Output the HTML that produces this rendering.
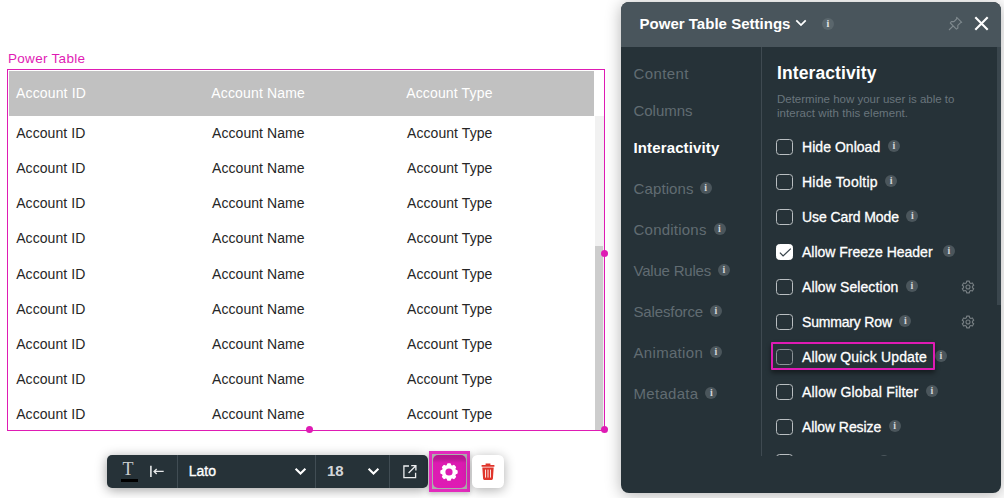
<!DOCTYPE html>
<html lang="en">
<head>
<meta charset="utf-8">
<title>Power Table Settings</title>
<style>
*{box-sizing:border-box;margin:0;padding:0}
html,body{width:1004px;height:498px;overflow:hidden;background:#fff}
body{position:relative;font-family:"Liberation Sans",sans-serif;color:#222}
.abs{position:absolute}
svg{position:absolute;overflow:visible}
/* ---------- table ---------- */
#lbl{left:8px;top:51px;font-size:13.5px;line-height:16px;color:#df1bb4;white-space:nowrap;letter-spacing:.3px}
#tbl{left:7px;top:69px;width:598px;height:362px;border:1px solid #df1bb4;background:#fff;overflow:hidden}
#thead{left:1px;top:1px;width:585px;height:45px;background:#c1c1c1}
.th,.td{position:absolute;font-size:14px;line-height:16px;white-space:nowrap;letter-spacing:.15px}
.th{color:#fff;top:15px}
.td{color:#262626;letter-spacing:.07px}
#track{left:587px;top:46px;width:9px;height:315px;background:#f1f1f1}
#thumb{left:587px;top:176px;width:8px;height:184px;background:#cdcdcd}
.dot{width:7px;height:7px;border-radius:50%;background:#df1bb4}
/* ---------- toolbar ---------- */
#tb{left:107px;top:455px;width:320.7px;height:32.6px;background:#263238;border-radius:5px;box-shadow:0 2px 12px rgba(0,0,0,.38)}
.sep{top:0;width:1px;height:33px;background:#414d54}
.tbt{color:#fff;font-size:14px;line-height:16px;white-space:nowrap}
#gearwrap{left:429px;top:451px;width:40.5px;height:40.5px;border:3px solid #e32bbd;background:#adadad;box-shadow:0 2px 5px rgba(0,0,0,.25)}
#gearbtn{left:1px;top:1px;width:33px;height:33px;background:linear-gradient(#b5168f,#bb1796 12%,#dc1bb1 24%,#df1bb4);border-radius:5px}
#del{left:472px;top:455px;width:31.6px;height:33px;background:#fff;border-radius:5.5px;box-shadow:0 2px 12px rgba(0,0,0,.32)}
/* ---------- panel ---------- */
#panel{left:621px;top:2px;width:380px;height:491px;background:#263238;border-radius:8px;box-shadow:0 2px 16px rgba(0,0,0,.3);overflow:hidden}
#phead{left:0;top:0;width:380px;height:45px;background:#49555c}
#ptitle{left:18.5px;top:12.5px;font-size:15px;line-height:18px;font-weight:bold;color:#fff;white-space:nowrap;letter-spacing:.02px}
#pbody{left:0;top:45px;width:380px;height:409px;overflow:hidden}
#vline{left:140px;top:0;width:1px;height:410px;background:#3f4a51}
.nav{position:absolute;left:12.5px;font-size:15px;line-height:18px;color:#616c72;white-space:nowrap}
.nav.on{color:#fff;font-weight:bold}
.info{position:absolute;width:12px;height:12px;border-radius:50%;background:#4b565c;color:#d4d7d9;font-size:10px;line-height:12px;text-align:center;font-weight:bold;font-family:"Liberation Serif",serif}
#sect{left:156px;top:16px;font-size:17.5px;line-height:20px;font-weight:bold;color:#fff;white-space:nowrap;letter-spacing:.1px}
.desc{left:156px;font-size:11.5px;line-height:13px;color:#69757c;white-space:nowrap}
.cb{position:absolute;left:155px;width:17px;height:16px;border:1.5px solid #b9bec1;border-radius:3.5px}
.cb.chk{background:#fff;border-color:#fff}
.cb.dim{border-color:#8b9397}
.opt{position:absolute;left:181px;font-size:14px;line-height:16px;color:#fff;white-space:nowrap;-webkit-text-stroke:.3px #fff}
#hl{left:150px;top:295px;width:164.3px;height:28px;border:2.4px solid #df1bb4;border-radius:1px;box-shadow:0 3px 5px rgba(0,0,0,.45)}
#pscroll{left:376px;top:45px;width:4px;height:258px;background:#3a464d}
</style>
</head>
<body>
<div id="lbl" class="abs">Power Table</div>
<div id="tbl" class="abs">
  <div id="thead" class="abs"></div>
  <div class="th" style="left:8px">Account ID</div>
  <div class="th" style="left:203.3px">Account Name</div>
  <div class="th" style="left:398.2px">Account Type</div>
  <div id="track" class="abs"></div>
  <div id="thumb" class="abs"></div>
  <div class="td" style="left:8.2px;top:55px">Account ID</div><div class="td" style="left:204px;top:55px">Account Name</div><div class="td" style="left:399px;top:55px">Account Type</div>
  <div class="td" style="left:8.2px;top:90px">Account ID</div><div class="td" style="left:204px;top:90px">Account Name</div><div class="td" style="left:399px;top:90px">Account Type</div>
  <div class="td" style="left:8.2px;top:125px">Account ID</div><div class="td" style="left:204px;top:125px">Account Name</div><div class="td" style="left:399px;top:125px">Account Type</div>
  <div class="td" style="left:8.2px;top:160px">Account ID</div><div class="td" style="left:204px;top:160px">Account Name</div><div class="td" style="left:399px;top:160px">Account Type</div>
  <div class="td" style="left:8.2px;top:196px">Account ID</div><div class="td" style="left:204px;top:196px">Account Name</div><div class="td" style="left:399px;top:196px">Account Type</div>
  <div class="td" style="left:8.2px;top:231px">Account ID</div><div class="td" style="left:204px;top:231px">Account Name</div><div class="td" style="left:399px;top:231px">Account Type</div>
  <div class="td" style="left:8.2px;top:266px">Account ID</div><div class="td" style="left:204px;top:266px">Account Name</div><div class="td" style="left:399px;top:266px">Account Type</div>
  <div class="td" style="left:8.2px;top:301px">Account ID</div><div class="td" style="left:204px;top:301px">Account Name</div><div class="td" style="left:399px;top:301px">Account Type</div>
  <div class="td" style="left:8.2px;top:336px">Account ID</div><div class="td" style="left:204px;top:336px">Account Name</div><div class="td" style="left:399px;top:336px">Account Type</div>
</div>
<div class="abs dot" style="left:601.3px;top:249.5px"></div>
<div class="abs dot" style="left:306px;top:426px"></div>
<div class="abs dot" style="left:600.8px;top:426px"></div>
<div id="tb" class="abs">
  <div class="abs" style="left:12px;top:3px;width:18px;text-align:center;font-family:'Liberation Serif',serif;font-size:18px;line-height:22px;color:#c9cdcf">T</div>
  <div class="abs" style="left:14px;top:24px;width:17px;height:3px;background:#000"></div>
  <svg style="left:42px;top:9px" width="16" height="14" viewBox="0 0 16 14"><path d="M1.9 1.7v11.4" stroke="#e6e8e9" stroke-width="1.6" fill="none"/><path d="M14.7 7.4H5.4M7.7 4.9l-2.6 2.5 2.6 2.5" stroke="#e6e8e9" stroke-width="1.4" fill="none"/></svg>
  <div class="abs sep" style="left:70px"></div>
  <div class="abs tbt" style="left:81.8px;top:8px;-webkit-text-stroke:.35px #fff">Lato</div>
  <svg style="left:187px;top:12px" width="13" height="9" viewBox="0 0 13 9"><path d="M1.6 1.8l4.9 4.7 4.9-4.7" stroke="#fff" stroke-width="2.1" fill="none"/></svg>
  <div class="abs sep" style="left:208px"></div>
  <div class="abs tbt" style="left:220px;top:8px;color:#d3d6d8;font-weight:bold;font-size:15px;letter-spacing:-.2px">18</div>
  <svg style="left:260px;top:12px" width="13" height="9" viewBox="0 0 13 9"><path d="M1.6 1.8l4.9 4.7 4.9-4.7" stroke="#fff" stroke-width="2.1" fill="none"/></svg>
  <div class="abs sep" style="left:282px"></div>
  <svg style="left:295px;top:9px" width="16" height="16" viewBox="0 0 16 16"><path d="M7 2H1.9v11.7h11.7V8.8" stroke="#eceeef" stroke-width="1.3" fill="none"/><path d="M6.6 9L13.6 2M9.2 1.7h4.7v4.7" stroke="#eceeef" stroke-width="1.3" fill="none"/></svg>
</div>
<div id="gearwrap" class="abs"><div id="gearbtn" class="abs"></div>
  <svg style="left:6.9px;top:7.5px" width="20" height="20" viewBox="0 0 20 20"><path fill="#fff" fill-rule="evenodd" stroke="#fff" stroke-width="1.5" stroke-linejoin="round" d="M11.68 3.72 L11.11 2.08 L8.89 2.08 L8.32 3.72 L6.75 4.37 L5.19 3.61 L3.61 5.19 L4.37 6.75 L3.72 8.32 L2.08 8.89 L2.08 11.11 L3.72 11.68 L4.37 13.25 L3.61 14.81 L5.19 16.39 L6.75 15.63 L8.32 16.28 L8.89 17.92 L11.11 17.92 L11.68 16.28 L13.25 15.63 L14.81 16.39 L16.39 14.81 L15.63 13.25 L16.28 11.68 L17.92 11.11 L17.92 8.89 L16.28 8.32 L15.63 6.75 L16.39 5.19 L14.81 3.61 L13.25 4.37Z"/><circle cx="10" cy="10" r="3.6" fill="#de1bb3"/></svg>
</div>
<div id="del" class="abs">
  <svg style="left:9px;top:7.5px" width="14" height="18" viewBox="0 0 14 18"><path fill="#e0352b" d="M4.6 0.6h4.8v1.3h4v1.9H0.6V1.9h4zM1.3 4.6h11.4l-.8 11.2c-.05.7-.6 1.2-1.3 1.2H3.4c-.700 0-1.25-.5-1.3-1.2z"/><path d="M4.5 6.6v8M7 6.6v8M9.5 6.6v8" stroke="#fbe3e1" stroke-width="1" fill="none"/></svg>
</div>

<div id="panel" class="abs">
  <div id="phead" class="abs"></div>
  <div id="ptitle" class="abs">Power Table Settings</div>
  <svg style="left:174px;top:17px" width="12" height="8" viewBox="0 0 12 8"><path d="M1.3 1.4l4.7 4.7 4.7-4.7" stroke="#fff" stroke-width="1.8" fill="none"/></svg>
  <div class="info" style="left:201px;top:16px;background:#5a666c;color:#e3e5e6">i</div>
  <svg style="left:327px;top:14px" width="15" height="15" viewBox="0 0 15 15"><path d="M8.7 1.3l5 5-1.3.5-2.6 2.6.1 2.6-1.5 1.1L2.3 7 3.4 5.5l2.6.1L8.6 3z M5.2 9.8L1 14" stroke="#7f898e" stroke-width="1.1" fill="none" stroke-linejoin="round"/></svg>
  <svg style="left:353px;top:14px" width="15" height="15" viewBox="0 0 15 15"><path d="M1.3 1.3l12.4 12.4M13.7 1.3L1.3 13.7" stroke="#fff" stroke-width="2.1" fill="none"/></svg>

  <div id="pbody" class="abs">
  <div id="vline" class="abs"></div>
  <div class="nav" style="top:18px;letter-spacing:0.41px">Content</div>
  <div class="nav" style="top:55px;letter-spacing:-0.04px">Columns</div>
  <div class="nav on" style="top:92px;letter-spacing:0.13px">Interactivity</div>
  <div class="nav" style="top:133px;letter-spacing:0.12px">Captions</div>
  <div class="info" style="left:78.7px;top:134.6px">i</div>
  <div class="nav" style="top:174px;letter-spacing:0.23px">Conditions</div>
  <div class="info" style="left:92.5px;top:175.6px">i</div>
  <div class="nav" style="top:215px;letter-spacing:-0.21px">Value Rules</div>
  <div class="info" style="left:96.8px;top:217px">i</div>
  <div class="nav" style="top:256px;letter-spacing:-0.13px">Salesforce</div>
  <div class="info" style="left:88.8px;top:257.5px">i</div>
  <div class="nav" style="top:297px;letter-spacing:0.32px">Animation</div>
  <div class="info" style="left:88.8px;top:299px">i</div>
  <div class="nav" style="top:338px;letter-spacing:0.3px">Metadata</div>
  <div class="info" style="left:84.3px;top:340px">i</div>
  <div id="sect" class="abs">Interactivity</div>
  <div class="abs desc" style="top:46px;letter-spacing:-.01px">Determine how your user is able to</div>
  <div class="abs desc" style="top:59.6px;letter-spacing:.05px">interact with this element.</div>
  <div class="cb" style="top:92px"></div><div class="opt" style="top:92px;letter-spacing:0.04px">Hide Onload</div><div class="info" style="left:267px;top:93px">i</div>
  <div class="cb" style="top:127px"></div><div class="opt" style="top:127px;letter-spacing:0.24px">Hide Tooltip</div><div class="info" style="left:264.2px;top:128px">i</div>
  <div class="cb" style="top:162px"></div><div class="opt" style="top:162px;letter-spacing:-0.09px">Use Card Mode</div><div class="info" style="left:285.4px;top:163px">i</div>
  <div class="cb chk" style="top:197px"></div><div class="opt" style="top:197px;letter-spacing:-0.01px">Allow Freeze Header</div><div class="info" style="left:322px;top:198px">i</div>
  <div class="cb" style="top:232px"></div><div class="opt" style="top:232px;letter-spacing:0.1px">Allow Selection</div><div class="info" style="left:285px;top:233px">i</div>
  <div class="cb" style="top:267px"></div><div class="opt" style="top:267px;letter-spacing:-0.18px">Summary Row</div><div class="info" style="left:278.4px;top:268px">i</div>
  <div class="cb dim" style="top:302px"></div><div class="opt" style="top:302px;letter-spacing:0.16px">Allow Quick Update</div><div class="info" style="left:313.9px;top:303px">i</div>
  <div class="cb" style="top:337px"></div><div class="opt" style="top:337px;letter-spacing:0.19px">Allow Global Filter</div><div class="info" style="left:305px;top:338px">i</div>
  <div class="cb" style="top:372px"></div><div class="opt" style="top:372px;letter-spacing:-0.08px">Allow Resize</div><div class="info" style="left:267.7px;top:373px">i</div>
  <div class="cb" style="top:407px"></div><div class="info" style="left:257px;top:408px">i</div>
  <svg style="left:155px;top:197px" width="17" height="16" viewBox="0 0 17 16"><path d="M3.9 8.6l3.2 3.3 7.7-7.3" stroke="#3a464d" stroke-width="1.3" fill="none"/></svg>
  <svg style="left:339.9px;top:233.1px" width="14" height="14" viewBox="0 0 14 14"><path d="M8.61 2.8 L8.35 1.15 L5.65 1.15 L5.39 2.8 L4.17 3.5 L2.61 2.91 L1.26 5.25 L2.56 6.3 L2.56 7.7 L1.26 8.75 L2.61 11.09 L4.17 10.5 L5.39 11.2 L5.65 12.85 L8.35 12.85 L8.61 11.2 L9.83 10.5 L11.39 11.09 L12.74 8.75 L11.44 7.7 L11.44 6.3 L12.74 5.25 L11.39 2.91 L9.83 3.5Z" stroke="#767e82" stroke-width="1.1" fill="none" stroke-linejoin="round"/><circle cx="7" cy="7" r="2" stroke="#767e82" stroke-width="1.1" fill="none"/></svg>
  <svg style="left:339.9px;top:268.1px" width="14" height="14" viewBox="0 0 14 14"><path d="M8.61 2.8 L8.35 1.15 L5.65 1.15 L5.39 2.8 L4.17 3.5 L2.61 2.91 L1.26 5.25 L2.56 6.3 L2.56 7.7 L1.26 8.75 L2.61 11.09 L4.17 10.5 L5.39 11.2 L5.65 12.85 L8.35 12.85 L8.61 11.2 L9.83 10.5 L11.39 11.09 L12.74 8.75 L11.44 7.7 L11.44 6.3 L12.74 5.25 L11.39 2.91 L9.83 3.5Z" stroke="#767e82" stroke-width="1.1" fill="none" stroke-linejoin="round"/><circle cx="7" cy="7" r="2" stroke="#767e82" stroke-width="1.1" fill="none"/></svg>

  <div id="hl" class="abs"></div>
  </div>
  <div id="pscroll" class="abs"></div>
</div>
</body>
</html>
